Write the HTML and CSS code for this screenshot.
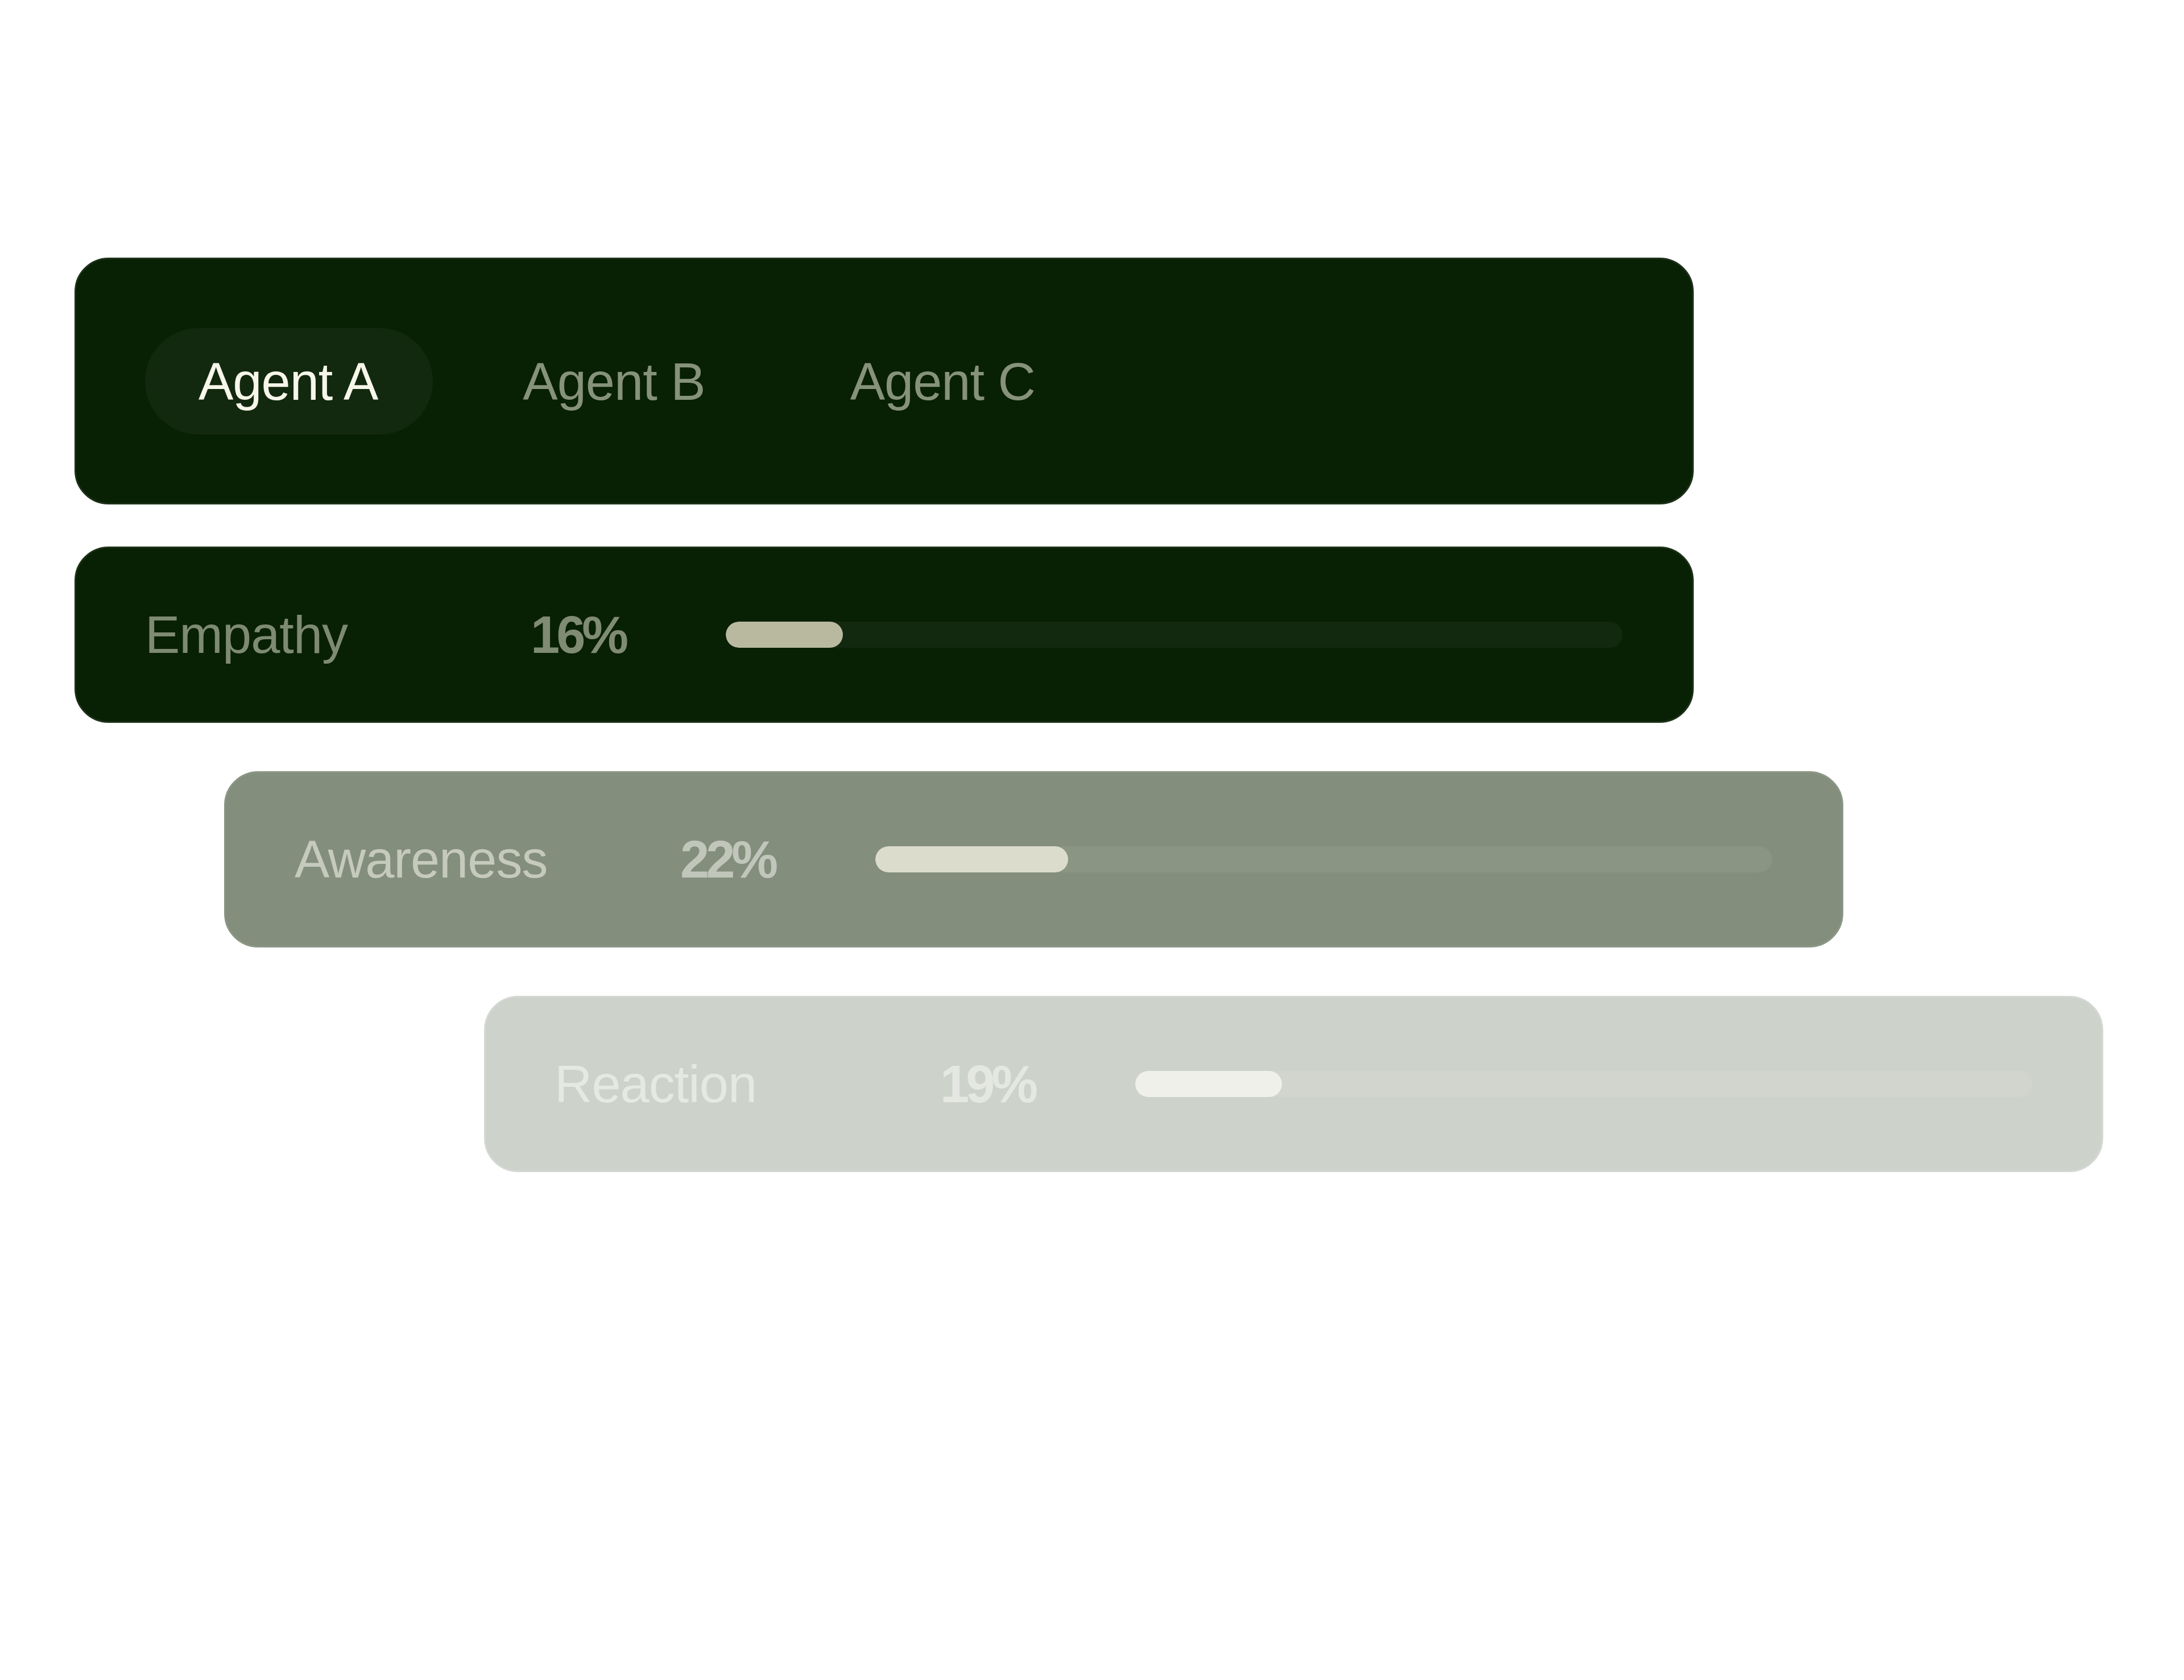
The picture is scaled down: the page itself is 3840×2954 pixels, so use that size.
FILE: index.html
```html
<!DOCTYPE html>
<html lang="en">
<head>
<meta charset="utf-8">
<title>Agent metrics</title>
<link rel="stylesheet" href="styles.css">
</head>
<body>
<main class="stack">
  <section class="card tabs-card">
    <nav class="tabs">
      <span class="tab tab-active">Agent A</span>
      <span class="tab">Agent B</span>
      <span class="tab">Agent C</span>
    </nav>
  </section>

  <section class="card metric metric-dark">
    <span class="metric-label">Empathy</span>
    <span class="metric-value">16%</span>
    <div class="track"><div class="fill" style="width: 206px"></div></div>
  </section>

  <section class="card metric metric-mid">
    <span class="metric-label">Awareness</span>
    <span class="metric-value">22%</span>
    <div class="track"><div class="fill" style="width: 339px"></div></div>
  </section>

  <section class="card metric metric-light">
    <span class="metric-label">Reaction</span>
    <span class="metric-value">19%</span>
    <div class="track"><div class="fill" style="width: 258px"></div></div>
  </section>
</main>
</body>
</html>
```
FILE: styles.css
```css
* { box-sizing: border-box; }

html, body {
  margin: 0;
  padding: 0;
  background: #ffffff;
}

body {
  width: 3840px;
  height: 2954px;
  font-family: "Liberation Sans", Arial, sans-serif;
  font-size: 92px;
  letter-spacing: -1px;
}

.stack {
  display: flex;
  flex-direction: column;
  align-items: flex-start;
  padding: 453px 0 0 131px;
}

.card {
  width: 2847px;
  border: 3px solid #1c3018;
  border-radius: 60px;
  background: #082004;
}

/* Tabs card */
.tabs-card {
  padding: 121px 121px 120px;
}

.tabs {
  display: flex;
  align-items: center;
  gap: 64px;
}

.tab {
  display: flex;
  align-items: center;
  height: 187px;
  padding: 0 97px 0 94px;
  border-radius: 94px;
  line-height: 1;
  color: #86927b;
  white-space: nowrap;
}

.tab-active {
  background: #13290f;
  color: #f7f6ea;
}

/* Metric rows */
.metric {
  display: grid;
  grid-template-columns: 678px 343px 1fr;
  align-items: center;
  height: 310px;
  padding: 0 122px 0 121px;
  line-height: 1;
}

.metric-dark { margin-top: 74px; }
.metric-mid { margin-top: 85px; margin-left: 263px; }
.metric-light { margin-top: 85px; margin-left: 720px; }

.metric-value {
  font-weight: 700;
  letter-spacing: -6px;
}

.track {
  height: 46px;
  border-radius: 23px;
  overflow: hidden;
}

.fill {
  height: 100%;
  border-radius: 23px;
}

.metric-dark .metric-label { color: #7e8a73; }
.metric-dark .metric-value { color: #7f8b74; }
.metric-dark .track { background: #13290f; }
.metric-dark .fill { background: #b8b99f; }

.metric-mid {
  background: #838e7d;
  border-color: #8b9686;
}
.metric-mid .metric-label { color: #c5cabd; }
.metric-mid .metric-value { color: #c1c6ba; }
.metric-mid .track { background: #8a9584; }
.metric-mid .fill { background: #dcdccd; }

.metric-light {
  background: #cdd2cb;
  border-color: #d4d8d2;
}
.metric-light .metric-label { color: #e6e8e3; }
.metric-light .metric-value { color: #e5e8e2; }
.metric-light .track { background: #d1d5ce; }
.metric-light .fill { background: #eff0ea; }
```
